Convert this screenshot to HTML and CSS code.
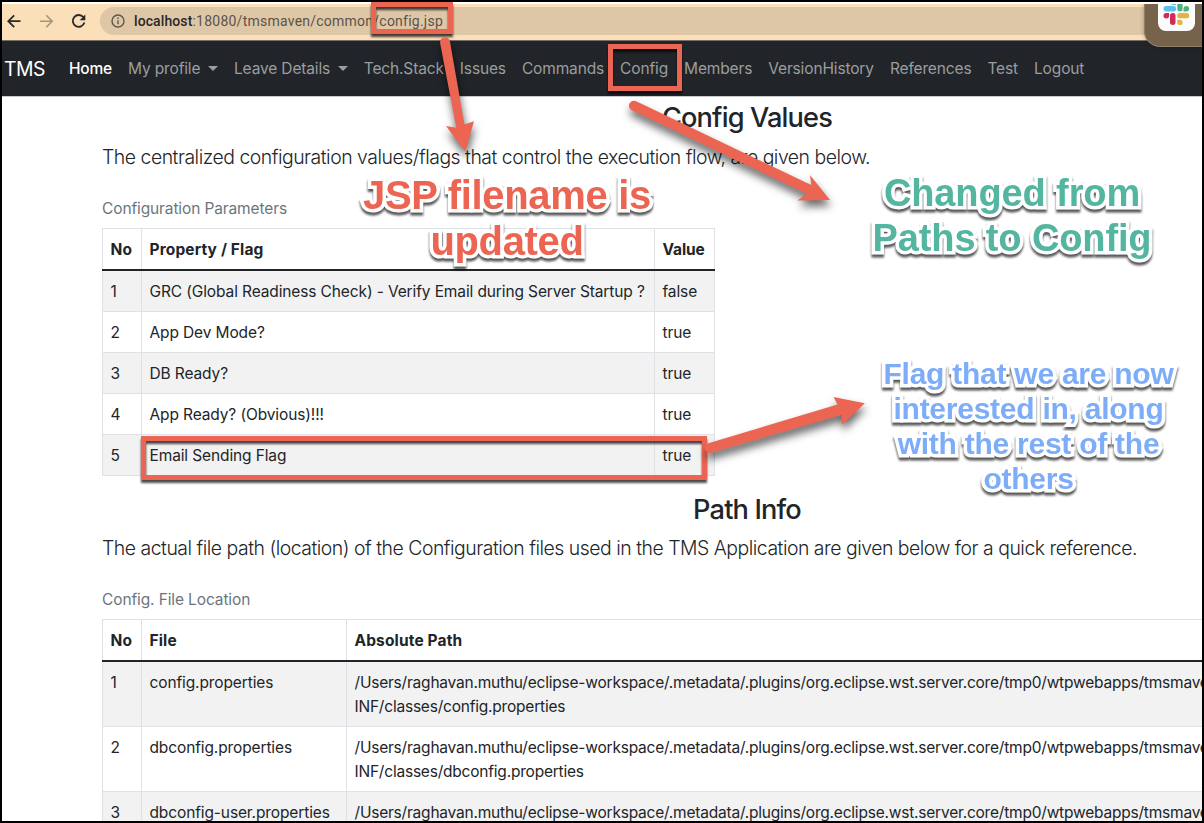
FILE: index.html
```html
<!DOCTYPE html>
<html lang="en">
<head>
<meta charset="utf-8">
<title>TMS - Config</title>
<link rel="stylesheet" href="styles.css">
</head>
<body>
<div class="frame">
  <header class="toolbar">
    <svg class="tool-icons" width="98" height="36" viewBox="2 4 98 36" fill="none" stroke-width="1.8">
      <g stroke="#2b2a2a"><path d="M20.5 21.2H8.6M14.2 15.3l-5.9 5.9 5.9 5.9"/><path d="M83.4 17.3a5.900 5.900 0 1 0 1 5.200" /><path d="M85.3 14.600v5.600h-5.600z" fill="#2b2a2a" stroke="none"/></g>
      <path d="M40 21.2h11.900M46.300 15.300l5.900 5.900-5.900 5.900" stroke="#a6957d" stroke-width="1.6"/>
    </svg>
    <div class="address">
      <svg width="14" height="14" viewBox="0 0 14 14" fill="none" stroke="#5f574d" stroke-width="1.4"><circle cx="7" cy="7" r="6"/><path d="M7 6.3v4M7 3.5v1.5"/></svg>
      <span class="url"><span class="host">localhost</span>:18080/tmsmaven/common/config.jsp</span>
    </div>
  </header>
  <nav class="navbar">
    <a class="brand">TMS</a>
    <a class="link active">Home</a>
    <a class="link drop">My profile</a>
    <a class="link drop">Leave Details</a>
    <a class="link">Tech.Stack</a>
    <a class="link">Issues</a>
    <a class="link">Commands</a>
    <a class="link">Config</a>
    <a class="link">Members</a>
    <a class="link">VersionHistory</a>
    <a class="link">References</a>
    <a class="link">Test</a>
    <a class="link">Logout</a>
  </nav>
  <main class="container">
    <h3>Config Values</h3>
    <p class="lead">The centralized configuration values/flags that control the execution flow, are given below.</p>
    <div class="caption">Configuration Parameters</div>
    <table class="table flags">
      <colgroup><col class="c-no"><col class="c-prop"><col class="c-val"></colgroup>
      <thead><tr><th>No</th><th>Property / Flag</th><th class="val">Value</th></tr></thead>
      <tbody>
        <tr><td>1</td><td>GRC (Global Readiness Check) - Verify Email during Server Startup ?</td><td>false</td></tr>
        <tr><td>2</td><td>App Dev Mode?</td><td>true</td></tr>
        <tr><td>3</td><td>DB Ready?</td><td>true</td></tr>
        <tr><td>4</td><td>App Ready? (Obvious)!!!</td><td>true</td></tr>
        <tr><td>5</td><td>Email Sending Flag</td><td>true</td></tr>
      </tbody>
    </table>
    <h3 class="second">Path Info</h3>
    <p class="lead">The actual file path (location) of the Configuration files used in the TMS Application are given below for a quick reference.</p>
    <div class="caption">Config. File Location</div>
    <table class="table paths">
      <colgroup><col class="c-no"><col class="c-file"><col class="c-path"></colgroup>
      <thead><tr><th>No</th><th>File</th><th>Absolute Path</th></tr></thead>
      <tbody>
        <tr><td>1</td><td>config.properties</td><td class="path">/Users/raghavan.muthu/eclipse-workspace/.metadata/.plugins/org.eclipse.wst.server.core/tmp0/wtpwebapps/tmsmave<br>INF/classes/config.properties</td></tr>
        <tr><td>2</td><td>dbconfig.properties</td><td class="path">/Users/raghavan.muthu/eclipse-workspace/.metadata/.plugins/org.eclipse.wst.server.core/tmp0/wtpwebapps/tmsmave<br>INF/classes/dbconfig.properties</td></tr>
        <tr><td>3</td><td>dbconfig-user.properties</td><td class="path">/Users/raghavan.muthu/eclipse-workspace/.metadata/.plugins/org.eclipse.wst.server.core/tmp0/wtpwebapps/tmsmave</td></tr>
      </tbody>
    </table>
  </main>
</div>

<div class="dock">
  <svg class="dock-icon" width="37" height="27" viewBox="1157.5 4 37 27">
    <path d="M1157.500 4h37v19a8 8 0 0 1-8 8h-21a8 8 0 0 1-8-8z" fill="#fcfcfc"/>
    <g fill="#5cc1ea"><rect x="1163" y="6" width="12.600" height="5.500" rx="2.700"/><path d="M1170.500 4h5v1h-3.600z"/></g>
    <g fill="#4fb07c"><path d="M1176.800 4h5.300v4.700a2.650 2.650 0 0 1-5.300 0z"/><path d="M1183 11.500V8.700a2.800 2.700 0 1 1 2.800 2.800z"/></g>
    <g fill="#cf2d58"><path d="M1168.600 13v2.700a2.800 2.700 0 1 1-2.800-2.700z"/><rect x="1169.500" y="13" width="5.500" height="12" rx="2.700"/></g>
    <g fill="#e4b23f"><rect x="1176.700" y="13" width="12" height="5.300" rx="2.650"/><path d="M1176.700 19.700h2.700a2.700 2.700 0 1 1-2.700 2.700z"/></g>
  </svg>
</div>

<div class="mark mark-url"></div>
<div class="mark mark-nav"></div>
<div class="mark mark-row"></div>
<svg class="arrows" width="1204" height="823" viewBox="0 0 1204 823">
  <g fill="#ec6553">
    <path d="M440.100 43A5 5 0 0 1 449.900 41.200L464.500 124.500 474 121.200 465.300 151.500 446 126 456.300 127.800Z"/>
    <path d="M631.800 110.200A5 5 0 0 1 636.200 101.200L811.200 185 810 175 830 200 797.300 200.600 807 194Z"/>
    <path d="M711.200 452.800A5 5 0 0 1 708.400 443.200L837.500 404.500 833.500 397 864.800 403.300 842 424.700 841.500 415Z"/>
  </g>
</svg>
<div class="note note-red">JSP filename is<br>updated</div>
<div class="note note-green">Changed from<br>Paths to Config</div>
<div class="note note-blue">Flag that we are now<br>interested in, along<br>with the rest of the<br>others</div>
</body>
</html>
```
FILE: styles.css
```css
* { box-sizing: border-box; }
body {
  margin: 0;
  position: relative;
  height: 823px;
  overflow: hidden;
  background: #fff;
  color: #212529;
  font: 400 15.5px/24px Inter, sans-serif;
  letter-spacing: -0.12px;
}
.frame {
  height: 823px;
  border: 2px solid #000;
  padding-top: 2px;
  overflow: hidden;
}
.toolbar {
  display: flex;
  height: 37px;
  background: #fbdfb9;
  border-bottom: 1px solid #77706a;
}
.tool-icons { flex: none; }
.address {
  flex: 1;
  display: flex;
  align-items: center;
  gap: 9px;
  height: 28px;
  margin-top: 3px;
  padding-left: 11px;
  border-radius: 14px 0 0 14px;
  background: #dec7a7;
}
.url {
  font: 400 14px/20px Roboto, sans-serif;
  letter-spacing: 0.24px;
  color: #5c5348;
}
.host { font-weight: 500; letter-spacing: 0.1px; color: #2b2825; }

.navbar {
  display: flex;
  align-items: center;
  gap: 16px;
  height: 56px;
  padding-left: 2px;
  background: #212529;
  border-bottom: 1px solid #c9cacb;
  color: #9b9d9e;
  letter-spacing: -0.14px;
  white-space: nowrap;
}
.brand {
  margin-right: 8px;
  font-size: 19.4px;
  letter-spacing: -0.5px;
  color: #fff;
}
.active { font-weight: 500; letter-spacing: -0.2px; color: #fff; }
.drop::after {
  content: "";
  display: inline-block;
  margin-left: 7.6px;
  vertical-align: 3px;
  border: 5px solid transparent;
  border-top-color: currentColor;
  border-bottom: 0;
}

.container { width: 1390px; padding-left: 100px; }
h3 {
  margin: 0 0 7px;
  font-weight: 500;
  font-size: 27.2px;
  line-height: 34px;
  letter-spacing: -0.85px;
  text-align: center;
}
.container > h3:first-child { padding-top: 3px; line-height: 35px; }
.container > .second { margin-bottom: 6px; }
.lead {
  margin: 0 0 17px;
  font-weight: 300;
  font-size: 19.4px;
  line-height: 30px;
  letter-spacing: -0.475px;
}
.caption { padding: 8px 0 0; height: 39px; line-height: 24px; color: #6c757d; }
.table {
  table-layout: fixed;
  border-collapse: collapse;
  margin: 0 0 17px;
}
.flags { width: 612px; }
.paths { width: 1290px; }
.c-no { width: 39px; }
.c-prop { width: 513px; }
.c-val { width: 60px; }
.c-file { width: 205px; }
.table th, .table td {
  border: 1px solid #dee2e6;
  padding: 9px 8px 7px 7.5px;
  text-align: left;
  vertical-align: top;
  white-space: nowrap;
}
.table th { border-bottom: 2px solid #212529; font-weight: 700; letter-spacing: 0.14px; }
.table th.val { letter-spacing: -0.1px; }
.table tbody tr:nth-child(odd) { background: #f2f2f2; }
.table td.path { letter-spacing: -0.21px; }

.dock {
  position: absolute;
  left: 1144px;
  top: 4px;
  width: 58px;
  height: 43px;
  padding-left: 12.5px;
  background: #77624b;
  border-bottom: 1px solid #8f7e68;
  border-left: 1px solid #8f7e68;
  border-radius: 0 0 0 16px;
  box-shadow: 0 0 4px rgba(0, 0, 0, 0.3);
  clip-path: inset(0 0 -6px -6px);
}
.dock-icon { display: block; }

.mark {
  position: absolute;
  border: 5px solid #ec6553;
  filter: drop-shadow(0 3px 1.2px rgba(0, 0, 0, 0.7));
}
.mark-url { left: 371px; top: 2px; width: 82px; height: 32px; }
.mark-nav { left: 608px; top: 44px; width: 74px; height: 47px; }
.mark-row { left: 141px; top: 436px; width: 566px; height: 44px; }
.arrows {
  position: absolute;
  left: 0;
  top: 0;
  filter: drop-shadow(1px 6px 4px rgba(0, 0, 0, 0.6));
}
.note {
  position: absolute;
  font-family: "Liberation Sans", Arial, sans-serif;
  font-weight: 700;
  text-align: center;
  white-space: nowrap;
  -webkit-text-stroke: 7px #fff;
  paint-order: stroke fill;
  filter: drop-shadow(0 3px 1.2px rgba(0, 0, 0, 0.65));
}
.note-red {
  left: 357px;
  top: 172px;
  width: 300px;
  font-size: 40px;
  line-height: 46px;
  letter-spacing: -0.33px;
  color: #ec6553;
}
.note-green {
  left: 862px;
  top: 171px;
  width: 300px;
  font-size: 38px;
  line-height: 44.5px;
  color: #54b6a0;
}
.note-blue {
  left: 874px;
  top: 356px;
  width: 309px;
  font-size: 30px;
  line-height: 35px;
  letter-spacing: -0.25px;
  color: #7dadf8;
}
```
